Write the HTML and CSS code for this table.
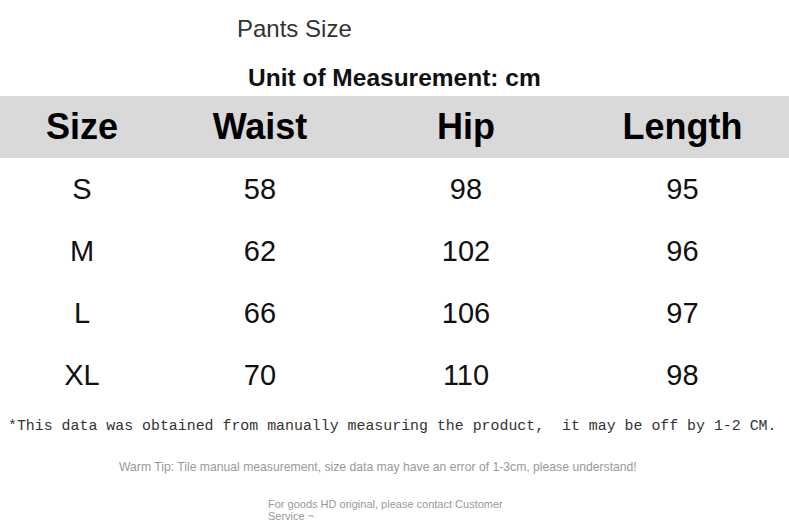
FILE: index.html
```html
<!DOCTYPE html>
<html>
<head>
<meta charset="utf-8">
<link rel="stylesheet" href="styles.css">
</head>
<body>
<div class="page">
  <h1 class="title">Pants Size</h1>
  <h2 class="unit">Unit of Measurement: cm</h2>
  <div class="table">
    <div class="row head">
      <div class="cell">Size</div>
      <div class="cell">Waist</div>
      <div class="cell">Hip</div>
      <div class="cell">Length</div>
    </div>
    <div class="row">
      <div class="cell">S</div><div class="cell">58</div><div class="cell">98</div><div class="cell">95</div>
    </div>
    <div class="row">
      <div class="cell">M</div><div class="cell">62</div><div class="cell">102</div><div class="cell">96</div>
    </div>
    <div class="row">
      <div class="cell">L</div><div class="cell">66</div><div class="cell">106</div><div class="cell">97</div>
    </div>
    <div class="row">
      <div class="cell">XL</div><div class="cell">70</div><div class="cell">110</div><div class="cell">98</div>
    </div>
  </div>
  <p class="note">*This data was obtained from manually measuring the product,  it may be off by 1-2 CM.</p>
  <p class="tip">Warm Tip: Tile manual measurement, size data may have an error of 1-3cm, please understand!</p>
  <p class="contact">For goods HD original, please contact Customer<br>Service ~</p>
</div>
</body>
</html>
```

FILE: styles.css
```css
html, body {
  margin: 0;
  padding: 0;
  background: #ffffff;
}
.page {
  width: 789px;
  height: 529px;
  overflow: hidden;
  font-family: "Liberation Sans", Arial, sans-serif;
  padding-top: 15px;
  box-sizing: border-box;
}
.title {
  margin: 0;
  padding-left: 237px;
  font-size: 24px;
  line-height: 28px;
  font-weight: normal;
  color: #333333;
}
.unit {
  margin: 21px 0 0 0;
  padding-left: 248px;
  font-size: 24.5px;
  line-height: 28px;
  font-weight: bold;
  color: #111111;
}
.table {
  margin-top: 4px;
}
.row {
  display: grid;
  grid-template-columns: 164px 192px 220px 213px;
  height: 62px;
  align-items: center;
  font-size: 29px;
  color: #111111;
}
.row.head {
  background: #d9d9d9;
  font-size: 36px;
  font-weight: bold;
  color: #000000;
}
.cell {
  text-align: center;
}
.note {
  margin: 10px 0 0 0;
  padding-left: 8px;
  font-family: "Liberation Mono", "Courier New", monospace;
  font-size: 14.9px;
  line-height: 20px;
  color: #333333;
  white-space: pre;
}
.tip {
  margin: 23px 0 0 0;
  padding-left: 119px;
  font-size: 12.2px;
  line-height: 16px;
  color: #999999;
}
.contact {
  margin: 23px 0 0 0;
  padding-left: 268px;
  font-size: 11px;
  line-height: 12px;
  color: #999999;
}
```
